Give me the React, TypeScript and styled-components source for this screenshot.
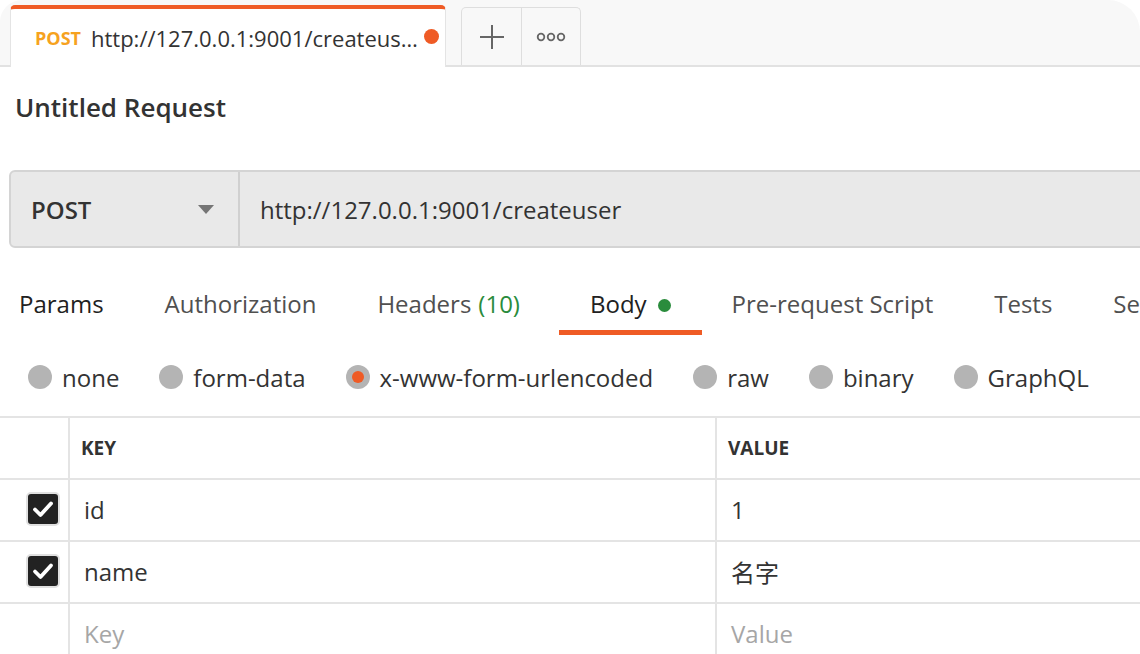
import styled, { createGlobalStyle } from 'styled-components';

const GlobalStyle = createGlobalStyle`
  html,
  body {
    margin: 0;
    padding: 0;
    background: #ffffff;
    overflow: hidden;
  }

  body {
    font-family: 'Open Sans', 'Noto Sans CJK SC', sans-serif;
    color: #333333;
  }
`;

const Page = styled.div`
  width: 1140px;
  height: 654px;
  overflow: hidden;
  background: #ffffff;
`;

const TabBar = styled.div`
  height: 65px;
  display: flex;
  align-items: flex-end;
  gap: 15px;
  padding-left: 10px;
  background: #f8f8f8;
  border-bottom: 2px solid #e2e2e2;
  border-radius: 22px 32px 0 0;
`;

const ActiveTab = styled.div`
  position: relative;
  z-index: 1;
  box-sizing: border-box;
  width: 436px;
  height: 62px;
  margin-bottom: -2px;
  display: flex;
  align-items: center;
  padding: 0 0 0 24px;
  background: #ffffff;
  border-top: 4px solid #ef5b25;
  border-left: 1px solid #e4e4e4;
  border-right: 1px solid #e4e4e4;
  border-radius: 5px 5px 0 0;
`;

const TabMethod = styled.span`
  font-size: 18px;
  font-weight: 700;
  color: #f6a21e;
  margin-right: 10px;
`;

const TabUrl = styled.span`
  max-width: 330px;
  font-size: 22px;
  color: #333333;
  white-space: nowrap;
  overflow: hidden;
  text-overflow: ellipsis;
`;

const UnsavedDot = styled.span`
  width: 15px;
  height: 15px;
  border-radius: 50%;
  background: #ef5b25;
  margin-left: 3px;
  margin-top: -4px;
`;

const TabActions = styled.div`
  display: flex;
  height: 58px;
  box-sizing: border-box;
  border: 1px solid #dedede;
  border-bottom: none;
  border-radius: 5px 5px 0 0;
`;

const TabAction = styled.button<{ $first?: boolean }>`
  width: 59px;
  height: 100%;
  padding: 0;
  display: flex;
  align-items: center;
  justify-content: center;
  background: transparent;
  border: none;
  border-left: ${({ $first }) => ($first ? 'none' : '1px solid #dedede')};
  color: #666666;
`;

const Title = styled.h1`
  margin: 21px 0 0 15px;
  font-size: 26px;
  line-height: 38px;
  font-weight: 600;
  color: #333333;
`;

const UrlBar = styled.div`
  box-sizing: border-box;
  width: 1160px;
  height: 78px;
  margin: 44px 0 0 9px;
  display: flex;
  background: #e9e9e9;
  border: 2px solid #d4d4d4;
  border-radius: 6px;
`;

const MethodSelect = styled.div`
  width: 229px;
  display: flex;
  align-items: center;
  justify-content: space-between;
  padding: 0 24px 0 20px;
  box-sizing: border-box;
  border-right: 2px solid #d0d0d0;
  font-size: 24px;
  font-weight: 600;
  color: #333333;
`;

const Caret = styled.span`
  width: 0;
  height: 0;
  border-left: 8px solid transparent;
  border-right: 8px solid transparent;
  border-top: 9px solid #757575;
`;

const UrlInput = styled.div`
  display: flex;
  align-items: center;
  padding-left: 20px;
  font-size: 24px;
  color: #333333;
`;

const RequestTabs = styled.div`
  display: flex;
  gap: 61px;
  margin: 39px 0 0 19px;
  height: 48px;
`;

const RequestTab = styled.div<{ $active?: boolean; $dark?: boolean }>`
  position: relative;
  display: flex;
  align-items: flex-start;
  font-size: 24px;
  line-height: 34px;
  white-space: nowrap;
  color: ${({ $dark }) => ($dark ? '#212121' : '#505050')};
  margin-left: ${({ $active }) => ($active ? '9px' : '0')};

  &::after {
    content: '';
    display: ${({ $active }) => ($active ? 'block' : 'none')};
    position: absolute;
    left: -31px;
    right: -31px;
    bottom: 0;
    height: 5px;
    background: #ef5b25;
  }
`;

const Count = styled.span`
  color: #2a8c3c;
  margin-left: 7px;
`;

const GreenDot = styled.span`
  width: 13px;
  height: 13px;
  margin: 12px 0 0 11px;
  border-radius: 50%;
  background: #2a8c3c;
`;

const BodyTypes = styled.div`
  display: flex;
  align-items: center;
  gap: 40px;
  height: 74px;
  padding-left: 28px;
  margin-top: 5px;
`;

const Radio = styled.label`
  display: flex;
  align-items: center;
  gap: 10px;
  font-size: 24px;
  color: #333333;
`;

const RadioCircle = styled.span<{ $checked?: boolean }>`
  width: 24px;
  height: 24px;
  border-radius: 50%;
  background: #b4b4b4;
  display: flex;
  align-items: center;
  justify-content: center;

  &::after {
    content: '';
    display: ${({ $checked }) => ($checked ? 'block' : 'none')};
    width: 12px;
    height: 12px;
    border-radius: 50%;
    background: #ef5b25;
  }
`;

const Table = styled.div`
  border-top: 2px solid #e4e4e4;
  margin-top: 2px;
`;

const Row = styled.div`
  display: grid;
  grid-template-columns: 68px 647px 1fr;
  height: 60px;
  border-bottom: 2px solid #e4e4e4;
`;

const Cell = styled.div<{ $head?: boolean; $muted?: boolean }>`
  display: flex;
  align-items: center;
  padding-left: ${({ $head }) => ($head ? '11px' : '14px')};
  padding-bottom: ${({ $head }) => ($head ? '0' : '2px')};
  border-left: 2px solid #e4e4e4;
  font-size: ${({ $head }) => ($head ? '19px' : '24px')};
  font-weight: ${({ $head }) => ($head ? 700 : 400)};
  color: ${({ $muted }) => ($muted ? '#a6a6a6' : '#333333')};
`;

const CheckCell = styled.div`
  display: flex;
  align-items: center;
  padding-left: 26px;
  padding-bottom: 2px;
`;

const Checkbox = styled.span`
  width: 34px;
  height: 34px;
  box-sizing: border-box;
  border-radius: 5px;
  background: #222222;
  border: 2px solid #e0e0e0;
  display: flex;
  align-items: center;
  justify-content: center;
`;

const PlusIcon = () => (
  <svg width="26" height="26" viewBox="0 0 26 26">
    <path d="M13 1v24M1 13h24" stroke="#666" strokeWidth="2" fill="none" />
  </svg>
);

const MoreIcon = () => (
  <svg width="30" height="10" viewBox="0 0 30 10">
    <circle cx="5" cy="5" r="3.3" stroke="#666" strokeWidth="1.8" fill="none" />
    <circle cx="15" cy="5" r="3.3" stroke="#666" strokeWidth="1.8" fill="none" />
    <circle cx="25" cy="5" r="3.3" stroke="#666" strokeWidth="1.8" fill="none" />
  </svg>
);

const CheckMark = () => (
  <svg width="22" height="18" viewBox="0 0 22 18">
    <path d="M3 9.5l5.5 5.5L19 3.5" stroke="#fff" strokeWidth="3.8" fill="none" strokeLinecap="round" strokeLinejoin="round" />
  </svg>
);

const bodyTypes = ['none', 'form-data', 'x-www-form-urlencoded', 'raw', 'binary', 'GraphQL'];

const params = [
  { key: 'id', value: '1' },
  { key: 'name', value: '名字' },
];

function App() {
  return (
    <Page>
      <GlobalStyle />
      <TabBar>
        <ActiveTab>
          <TabMethod>POST</TabMethod>
          <TabUrl>http://127.0.0.1:9001/createuser</TabUrl>
          <UnsavedDot />
        </ActiveTab>
        <TabActions>
          <TabAction $first>
            <PlusIcon />
          </TabAction>
          <TabAction>
            <MoreIcon />
          </TabAction>
        </TabActions>
      </TabBar>

      <Title>Untitled Request</Title>

      <UrlBar>
        <MethodSelect>
          POST
          <Caret />
        </MethodSelect>
        <UrlInput>http://127.0.0.1:9001/createuser</UrlInput>
      </UrlBar>

      <RequestTabs>
        <RequestTab $dark>Params</RequestTab>
        <RequestTab>Authorization</RequestTab>
        <RequestTab>
          Headers<Count>(10)</Count>
        </RequestTab>
        <RequestTab $dark $active>
          Body
          <GreenDot />
        </RequestTab>
        <RequestTab>Pre-request Script</RequestTab>
        <RequestTab>Tests</RequestTab>
        <RequestTab>Settings</RequestTab>
      </RequestTabs>

      <BodyTypes>
        {bodyTypes.map((t) => (
          <Radio key={t}>
            <RadioCircle $checked={t === 'x-www-form-urlencoded'} />
            {t}
          </Radio>
        ))}
      </BodyTypes>

      <Table>
        <Row>
          <CheckCell />
          <Cell $head>KEY</Cell>
          <Cell $head>VALUE</Cell>
        </Row>
        {params.map((p) => (
          <Row key={p.key}>
            <CheckCell>
              <Checkbox>
                <CheckMark />
              </Checkbox>
            </CheckCell>
            <Cell>{p.key}</Cell>
            <Cell>{p.value}</Cell>
          </Row>
        ))}
        <Row>
          <CheckCell />
          <Cell $muted>Key</Cell>
          <Cell $muted>Value</Cell>
        </Row>
      </Table>
    </Page>
  );
}

export default App;
